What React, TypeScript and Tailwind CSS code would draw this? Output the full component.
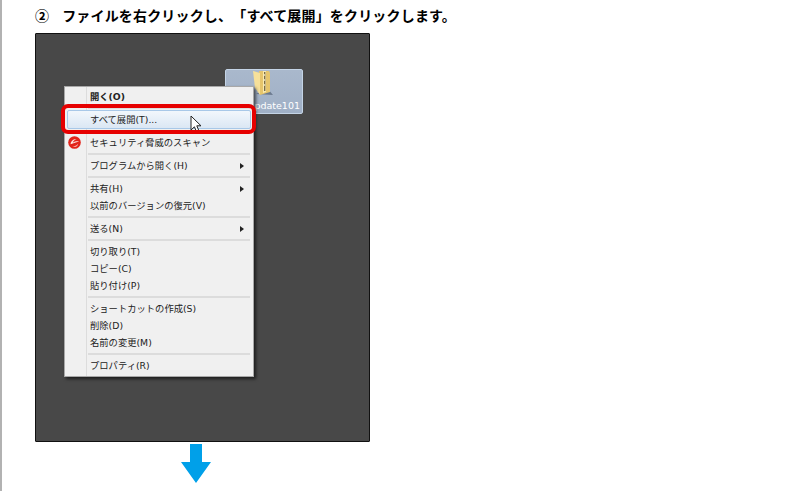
import React from 'react';

type Row = { label: string; bold?: boolean; sub?: boolean; hover?: boolean; scan?: boolean };

// null marks a separator
const menu: (Row | null)[] = [
  { label: '開く(O)', bold: true },
  null,
  { label: 'すべて展開(T)...', hover: true },
  null,
  { label: 'セキュリティ脅威のスキャン', scan: true },
  null,
  { label: 'プログラムから開く(H)', sub: true },
  null,
  { label: '共有(H)', sub: true },
  { label: '以前のバージョンの復元(V)' },
  null,
  { label: '送る(N)', sub: true },
  null,
  { label: '切り取り(T)' },
  { label: 'コピー(C)' },
  { label: '貼り付け(P)' },
  null,
  { label: 'ショートカットの作成(S)' },
  { label: '削除(D)' },
  { label: '名前の変更(M)' },
  null,
  { label: 'プロパティ(R)' },
];

function ScanIcon() {
  return (
    <svg width="13" height="13" viewBox="0 0 13 13">
      <circle cx="6.5" cy="6.5" r="6.3" fill="#e2231a" />
      <path d="M2.6 8.2C2.6 5 5.4 2.8 8.6 3.2 6.6 3.8 5.2 5 4.8 6.8 6.4 5.6 8.6 5.2 11 5.4 8.4 6 5.6 7 2.6 8.2Z" fill="#fde8e4" />
      <path d="M4 10C6.4 10.6 9 9.6 10.2 7.4 10.2 9.4 8.4 10.8 6.6 10.8 5.6 10.8 4.6 10.5 4 10Z" fill="#f9c8bf" />
    </svg>
  );
}

function FolderIcon() {
  return (
    <svg width="22" height="26" viewBox="0 0 22 26">
      <path d="M4 24L21 25L15 18Z" fill="#4f5c70" opacity="0.65" />
      <path d="M7 1H17L18 3V22L8 25Z" fill="#e6c56c" />
      <path d="M1 1L8 3V25L3 18Z" fill="#f6e09a" />
      <path d="M11 1H14V22L11 23Z" fill="#f9eab0" />
      <path d="M12 2H13.4V21H12Z" fill="#7c6c44" />
      <path d="M12.3 4H13.1V6H12.3ZM12.3 9H13.1V11H12.3ZM12.3 14H13.1V16H12.3Z" fill="#fbf3cf" />
    </svg>
  );
}

function Cursor() {
  return (
    <svg width="13" height="19" viewBox="0 0 13 19" className="absolute left-[122px] top-[4px]">
      <path d="M1 1V15L4.4 11.8L6.8 17.4L9.2 16.4L6.8 10.8H11Z" fill="#fff" stroke="#222" strokeWidth="1" strokeLinejoin="round" />
    </svg>
  );
}

function MenuRow({ row }: { row: Row }) {
  return (
    <div
      className={
        row.hover
          ? 'relative -my-px flex h-[19px] items-center rounded-[2px] border border-[#a8c8e8] bg-gradient-to-b from-[#f2f7fc] to-[#dbe7f4] text-[9.3px] leading-none text-[#222]'
          : 'relative flex h-[17px] items-center text-[9.3px] leading-none text-[#222]'
      }
    >
      <div className={row.hover ? 'w-[22px] shrink-0' : 'w-[23px] shrink-0 pl-px'}>
        {row.scan && <ScanIcon />}
      </div>
      <span className={row.bold ? 'font-bold' : ''}>{row.label}</span>
      {row.hover && <Cursor />}
      {row.sub && (
        <span className="ml-auto mr-[7px] border-y-[3px] border-l-[4px] border-y-transparent border-l-[#222]" />
      )}
    </div>
  );
}

export default function App() {
  return (
    <div className="h-[491px] w-[812px] overflow-hidden bg-white border-l-2 border-[#b2b2b2] pl-[33px] font-['Liberation_Sans','Noto_Sans_CJK_JP',sans-serif]">
      <h2 className="flex h-[33px] items-start gap-[13px] pt-[8px] text-[14px] leading-[16px] font-bold tracking-[0.17px] text-black whitespace-nowrap [text-spacing-trim:space-all]">
        <span>②</span>
        <span>ファイルを右クリックし、「すべて展開」をクリックします。</span>
      </h2>

      <div className="relative h-[409px] w-[335px] rounded-[1px] border border-[#111] bg-[#484848]">
        {/* selected file on the desktop */}
        <div className="absolute left-[189px] top-[35px] flex h-[45px] w-[78px] flex-col items-center rounded-[2px] border border-[#c4d4e6] bg-gradient-to-b from-[#a9b8cc] to-[#a0b0c6] pr-[2px] pb-[1px] font-['DejaVu_Sans','Noto_Sans_CJK_JP',sans-serif]">
          <FolderIcon />
          <span className="mt-auto self-end text-[9.5px] leading-[12px] text-white">update101</span>
        </div>

        {/* context menu */}
        <div className="absolute left-[28px] top-[52px] w-[190px] border border-[#a8a8a8] bg-[#f0f0f0] px-[2px] pt-px pb-[2px] font-['DejaVu_Sans','Noto_Sans_CJK_JP',sans-serif] shadow-[2px_2px_3px_rgba(0,0,0,0.6)]">
          <div className="absolute left-[21px] top-0 bottom-0 w-px bg-[#dcdcdc]" />
          {menu.map((row, i) =>
            row ? (
              <MenuRow key={i} row={row} />
            ) : (
              <div key={i} className="ml-[21px] mr-px flex h-[6px] items-center">
                <div className="h-[2px] w-full bg-[#dcdcdc]" />
              </div>
            )
          )}
          {/* red highlight round the hovered row */}
          <div className="absolute left-[-4px] right-[-3px] top-[17px] h-[30px] rounded-[7px] border-4 border-[#e60000]" />
        </div>
      </div>

      <svg width="30" height="40" viewBox="0 0 30 40" className="ml-[146px] mt-[2px]">
        <path d="M9 0H21V18H30L15 39L0 18H9Z" fill="#00a0e9" />
      </svg>
    </div>
  );
}
